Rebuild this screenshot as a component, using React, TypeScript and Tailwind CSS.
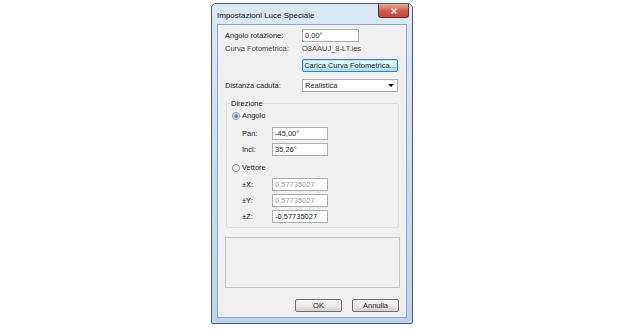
import { X } from "lucide-react"

const font = { fontFamily: '"Liberation Sans", Arial, sans-serif' }

function TextBox({ value, disabled = false, wide = false }: { value: string; disabled?: boolean; wide?: boolean }) {
  return (
    <div
      className={`h-[13px] ${wide ? "w-[57px]" : "w-[56px]"} border border-[#abadb3] bg-white flex items-center pl-[2px] ${
        disabled ? "text-[#a0a0a0]" : "text-[#222]"
      }`}
    >
      {value}
    </div>
  )
}

function Radio({ checked, label }: { checked: boolean; label: string }) {
  return (
    <div className="flex items-center h-[10px]">
      <div className="w-[8px] h-[8px] rounded-full border border-[#8e8f8f] bg-gradient-to-br from-[#e6e6e6] to-white flex items-center justify-center">
        {checked && <div className="w-[4px] h-[4px] rounded-full bg-gradient-to-br from-[#7fb0e6] to-[#1d5fb0]" />}
      </div>
      <span className="ml-[2px]">{label}</span>
    </div>
  )
}

function VecRow({ label, value, disabled }: { label: string; value: string; disabled?: boolean }) {
  return (
    <div className="flex items-center h-[13px]">
      <span className="w-[40px] pl-[10px]">{label}</span>
      <TextBox value={value} disabled={disabled} />
    </div>
  )
}

export default function App() {
  return (
    <div className="w-[624px] h-[330px] bg-white pt-[3px] pl-[211px] text-[7.5px] text-[#222] antialiased" style={font}>
      <div className="w-[202px] h-[321px] rounded-t-[5px] rounded-b-[2px] border border-[#4e5e70] bg-gradient-to-b from-[#dce9f6] via-[#c9dcf0] to-[#bed4ec] flex flex-col">
        <div className="h-[20px] flex items-start justify-between pl-[5px] pr-[3px]">
          <span className="mt-[6px] text-[8px] text-[#111]">Impostazioni Luce Speciale</span>
          <div className="w-[31px] h-[14px] rounded-b-[3px] border border-t-0 border-[#6b2a22] bg-gradient-to-b from-[#e8a89c] via-[#d2614e] to-[#c24532] flex items-center justify-center">
            <X className="w-[8px] h-[8px] text-white" strokeWidth={4} />
          </div>
        </div>
        <div className="flex-1 mx-[5px] mb-[5px] border border-[#8ea6c1] bg-[#f0f0f0] flex flex-col">
          <div className="mt-[4px] flex items-center h-[13px] pl-[7px]">
            <span className="w-[77px]">Angolo rotazione:</span>
            <TextBox value="0,00°" wide />
          </div>
          <div className="mt-[2px] flex items-center h-[10px] pl-[7px] text-[#444]">
            <span className="w-[77px]">Curva Fotometrica:</span>
            <span>O3AAUJ_8-LT.ies</span>
          </div>
          <div className="mt-[5px] pl-[84px]">
            <div className="w-[96px] h-[13px] rounded-[2px] border border-[#3c7fb1] bg-gradient-to-b from-[#eaf6fd] via-[#d9f0fc] to-[#a7d9f5] flex items-center justify-center shadow-[inset_0_0_0_1px_#a6e3f8]">
              Carica Curva Fotometrica...
            </div>
          </div>
          <div className="mt-[7px] flex items-center h-[13px] pl-[7px]">
            <span className="w-[77px]">Distanza caduta:</span>
            <div className="w-[96px] h-[13px] border border-[#abadb3] bg-white flex items-center justify-between pl-[2px] pr-[3px]">
              <span>Realistica</span>
              <span className="w-0 h-0 border-l-[3px] border-r-[3px] border-t-[3px] border-l-transparent border-r-transparent border-t-black" />
            </div>
          </div>
          <div className="mt-[11px] ml-[8px] w-[173px] h-[125px] border border-[#d5dfe5] rounded-[2px] relative flex flex-col pl-[5px]">
            <span className="absolute -top-[6px] left-[3px] px-[1px] bg-[#f0f0f0]">Direzione</span>
            <div className="mt-[7px]">
              <Radio checked label="Angolo" />
            </div>
            <div className="mt-[6px] flex flex-col gap-[3px]">
              <VecRow label="Pan:" value="-45,00°" />
              <VecRow label="Incl:" value="35,26°" />
            </div>
            <div className="mt-[7px]">
              <Radio checked={false} label="Vettore" />
            </div>
            <div className="mt-[5px] flex flex-col gap-[3px]">
              <VecRow label="±X:" value="0,57735027" disabled />
              <VecRow label="±Y:" value="0,57735027" disabled />
              <VecRow label="±Z:" value="-0,57735027" />
            </div>
          </div>
          <div className="mt-[9px] ml-[7px] w-[175px] h-[51px] border border-[#c5c5c5]" />
          <div className="mt-[11px] flex justify-end gap-[10px] pr-[7px]">
            <div className="w-[47px] h-[13px] rounded-[2px] border border-[#707070] bg-gradient-to-b from-[#f2f2f2] via-[#ebebeb] to-[#cfcfcf] flex items-center justify-center">
              OK
            </div>
            <div className="w-[47px] h-[13px] rounded-[2px] border border-[#707070] bg-gradient-to-b from-[#f2f2f2] via-[#ebebeb] to-[#cfcfcf] flex items-center justify-center">
              Annulla
            </div>
          </div>
        </div>
      </div>
    </div>
  )
}
